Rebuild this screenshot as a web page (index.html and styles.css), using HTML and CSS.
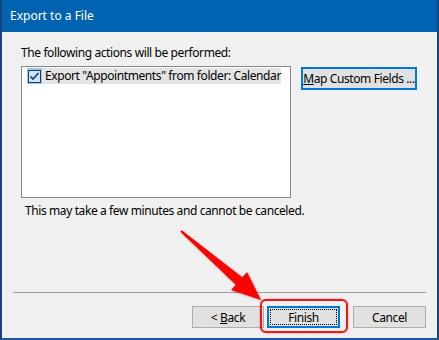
FILE: index.html
```html
<!DOCTYPE html>
<html>
<head>
<meta charset="utf-8">
<link rel="stylesheet" href="styles.css">
</head>
<body>
<div class="window">
  <div class="titlebar">Export to a File</div>
  <div class="content">
    <div class="top">
      <div class="label">The following actions will be performed:</div>
      <div class="row">
        <div class="listbox">
          <div class="item">
            <span class="check">
              <svg width="15" height="16" viewBox="0 0 15 16">
                <rect x="0" y="0" width="15" height="16" fill="#99c9ef"/>
                <rect x="1.5" y="2.5" width="12" height="12" fill="#cce4f7" stroke="#1c3b66" stroke-width="1"/>
                <path d="M3.5 8.5 L6 11 L11.5 5" fill="none" stroke="#1c3b66" stroke-width="1.6"/>
              </svg>
            </span>
            <span class="item-text">Export "Appointments" from folder: Calendar</span>
          </div>
        </div>
        <div class="btn btn-map"><span><span class="u">M</span>ap Custom Fields ...</span></div>
      </div>
      <div class="note">This may take a few minutes and cannot be canceled.</div>
    </div>
    <div class="footer">
      <div class="separator"></div>
      <div class="buttons">
        <div class="btn btn-back"><span>&lt; <span class="u">B</span>ack</span></div>
        <div class="btn btn-finish"><span class="focus">Finish</span></div>
        <div class="btn btn-cancel"><span>Cancel</span></div>
      </div>
    </div>
  </div>
  <div class="highlight"></div>
  <svg class="arrow" width="439" height="340" viewBox="0 0 439 340">
    <polygon points="180.3,231.8 181.7,230.2 242.3,277.2 247,272 261,300 231,290 235.7,284.8" fill="#ff0000"/>
  </svg>
</div>
</body>
</html>
```

FILE: styles.css
```css
* { box-sizing: border-box; }
html, body { margin: 0; padding: 0; }
body {
  width: 439px;
  height: 340px;
  overflow: hidden;
  font-family: "Noto Sans", "Open Sans", sans-serif;
  font-size: 12px;
  letter-spacing: -0.4px;
  color: #000;
}
.window {
  position: relative;
  width: 439px;
  height: 340px;
  display: flex;
  flex-direction: column;
  border-left: 2px solid #17457c;
  border-right: 2px solid #17457c;
  border-bottom: 2px solid #1c5a9c;
  background: #f0f0f0;
}
.titlebar {
  height: 32px;
  background: #0063b1;
  color: #fff;
  padding-left: 8px;
  line-height: 32px;
  font-size: 12px;
  letter-spacing: 0;
}
.content {
  flex: 1;
  display: flex;
  flex-direction: column;
  justify-content: space-between;
}
.top {
  padding: 13px 0 0 19px;
}
.label {
  line-height: 16px;
}
.row {
  display: flex;
  align-items: flex-start;
  gap: 10px;
  margin-top: 5px;
}
.listbox {
  width: 270px;
  height: 132px;
  background: #fff;
  border: 1px solid #828790;
  padding: 1px 9px 0 5px;
}
.item {
  display: flex;
  align-items: center;
  height: 16px;
}
.check {
  width: 15px;
  height: 16px;
  display: block;
}
.check svg { display: block; }
.item-text {
  flex: 1;
  height: 16px;
  line-height: 16px;
  background: #e5e5e5;
  padding-left: 3px;
  white-space: nowrap;
}
.btn {
  width: 73px;
  height: 22px;
  background: #e1e1e1;
  border: 1px solid #adadad;
  display: flex;
  align-items: center;
  justify-content: center;
  white-space: nowrap;
}
.u { text-decoration: underline; }
.btn-map {
  width: 116px;
  height: 23px;
  margin-top: 1px;
  border: 2px solid #0078d7;
}
.note {
  margin-top: 5px;
  margin-left: 4px;
  line-height: 16px;
}
.footer {
  padding: 0 11px 10px 11px;
}
.separator {
  border-top: 1px solid #a0a0a0;
}
.buttons {
  display: flex;
  justify-content: flex-end;
  margin-top: 13px;
}
.btn-back {
  width: 72px;
}
.btn-finish {
  margin-left: 3px;
  border: 2px solid #0078d7;
  padding: 1px;
}
.btn-finish .focus {
  width: 100%;
  height: 100%;
  border: 1px dotted #000;
  display: flex;
  align-items: center;
  justify-content: center;
}
.btn-cancel {
  margin-left: 13px;
}
.highlight {
  position: absolute;
  left: 258px;
  top: 299px;
  width: 88px;
  height: 34px;
  border: 2px solid #f0141a;
  border-radius: 6px;
  box-shadow: 0 0 2px rgba(180,0,0,0.5);
}
.arrow {
  position: absolute;
  left: -2px;
  top: 0;
  filter: drop-shadow(1px 1px 1px rgba(0,0,0,0.3));
  pointer-events: none;
}
```
